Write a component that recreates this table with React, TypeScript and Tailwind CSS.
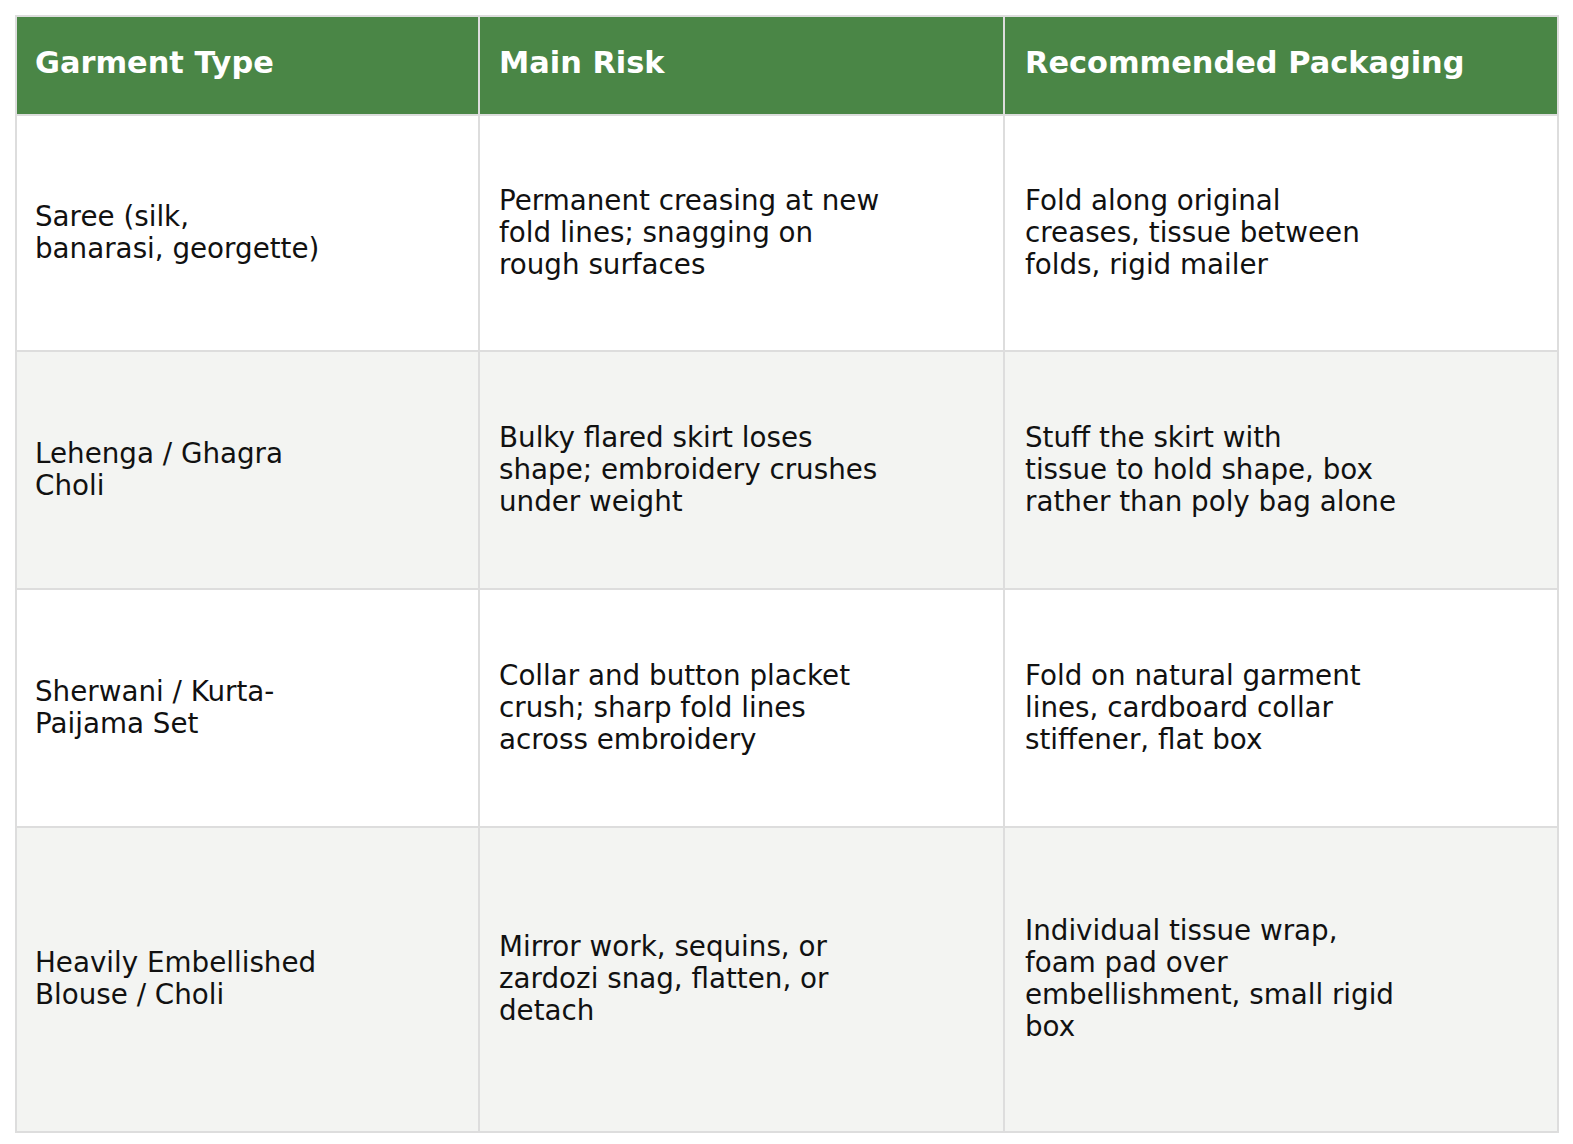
const headers = ['Garment Type', 'Main Risk', 'Recommended Packaging'];

const rows: { lines: string[][]; h: string; bg: string }[] = [
  {
    lines: [
      ['Saree (silk,', 'banarasi, georgette)'],
      ['Permanent creasing at new', 'fold lines; snagging on', 'rough surfaces'],
      ['Fold along original', 'creases, tissue between', 'folds, rigid mailer'],
    ],
    h: 'h-[234px]',
    bg: 'bg-white',
  },
  {
    lines: [
      ['Lehenga / Ghagra', 'Choli'],
      ['Bulky flared skirt loses', 'shape; embroidery crushes', 'under weight'],
      ['Stuff the skirt with', 'tissue to hold shape, box', 'rather than poly bag alone'],
    ],
    h: 'h-[236px]',
    bg: 'bg-[#f3f4f2]',
  },
  {
    lines: [
      ['Sherwani / Kurta-', 'Paijama Set'],
      ['Collar and button placket', 'crush; sharp fold lines', 'across embroidery'],
      ['Fold on natural garment', 'lines, cardboard collar', 'stiffener, flat box'],
    ],
    h: 'h-[236px]',
    bg: 'bg-white',
  },
  {
    lines: [
      ['Heavily Embellished', 'Blouse / Choli'],
      ['Mirror work, sequins, or', 'zardozi snag, flatten, or', 'detach'],
      ['Individual tissue wrap,', 'foam pad over', 'embellishment, small rigid', 'box'],
    ],
    h: 'h-[303px]',
    bg: 'bg-[#f3f4f2]',
  },
];

const cols = 'grid grid-cols-[461px_525px_1fr]';
const pad = ['pl-[18px] pr-[18px]', 'pl-[19px] pr-[18px] border-l-2 border-[#dddddd]', 'pl-[20px] pr-[18px] border-l-2 border-[#dddddd]'];

export default function App() {
  return (
    <div className="min-h-screen bg-white pt-[15px] pl-[15px]" style={{ fontFamily: '"DejaVu Sans", sans-serif' }}>
      <div className="w-[1544px] border-2 border-[#dddddd]">
        <div className={`${cols} h-[97px] bg-[#4a8646] text-white`}>
          {headers.map((t, i) => (
            <div key={t} className={`flex items-center pb-[6px] text-[30.4px] font-bold leading-[36px] ${pad[i]}`}>
              {t}
            </div>
          ))}
        </div>
        {rows.map((r, ri) => (
          <div key={ri} className={`${cols} ${r.h} ${r.bg} box-content border-t-2 border-[#dddddd] text-[#111111]`}>
            {r.lines.map((cell, ci) => (
              <div key={ci} className={`flex flex-col justify-center pb-[1px] text-[27.75px] leading-[32px] ${pad[ci]}`}>
                {cell.map((l) => (
                  <span key={l} className="whitespace-nowrap">
                    {l}
                  </span>
                ))}
              </div>
            ))}
          </div>
        ))}
      </div>
    </div>
  );
}
